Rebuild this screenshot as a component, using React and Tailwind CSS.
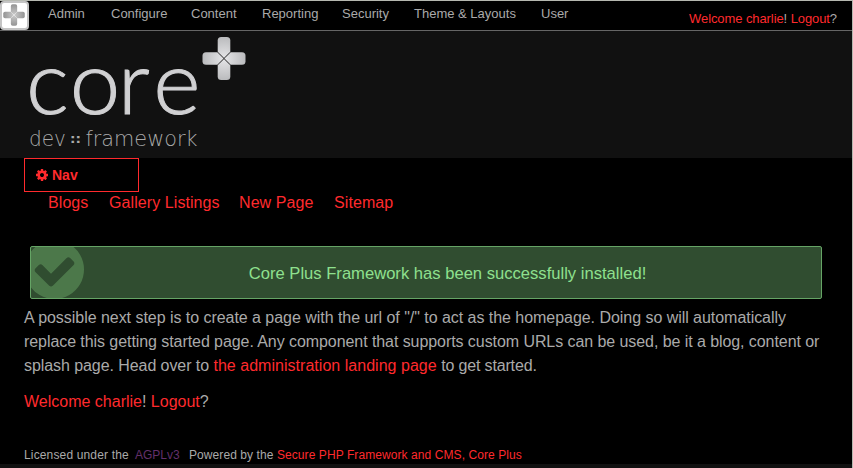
const adminMenu = [
  ["Admin", "w-[63px]"],
  ["Configure", "w-[80px]"],
  ["Content", "w-[71px]"],
  ["Reporting", "w-[80px]"],
  ["Security", "w-[72px]"],
  ["Theme & Layouts", "w-[127px]"],
  ["User", "w-[40px]"],
];

const pages = [
  ["Blogs", "w-[61px]"],
  ["Gallery Listings", "w-[130px]"],
  ["New Page", "w-[95px]"],
  ["Sitemap", "w-[70px]"],
];

function Link({ children }) {
  return <a className="text-[#ff2a2d]">{children}</a>;
}

function CogIcon({ className }) {
  return (
    <svg viewBox="0 0 1536 1536" fill="currentColor" className={className}>
      <path d="M1024 768q0-106-75-181t-181-75-181 75-75 181 75 181 181 75 181-75 75-181zm512-109v222q0 12-8 23t-20 13l-185 28q-19 54-39 91 35 50 107 138 10 12 10 25t-9 23q-27 37-99 108t-94 71q-12 0-26-9l-138-108q-44 23-91 38-16 136-29 186-7 28-36 28h-222q-14 0-24.500-8.500t-11.500-21.500l-28-184q-49-16-90-37l-141 107q-10 9-25 9-14 0-25-11-126-114-165-168-7-10-7-23 0-12 8-23 15-21 51-66.500t54-70.500q-27-50-41-99l-183-27q-13-2-21-12.500t-8-23.500v-222q0-12 8-23t19-13l186-28q14-46 39-92-40-57-107-138-10-12-10-24 0-10 9-23 26-36 98.500-107.500t94.500-71.500q13 0 26 10l138 107q44-23 91-38 16-136 29-186 7-28 36-28h222q14 0 24.500 8.500t11.500 21.500l28 184q49 16 90 37l142-107q9-9 24-9 13 0 25 10 129 119 165 170 7 8 7 22 0 12-8 23-15 21-51 66.500t-54 70.500q26 50 41 98l183 28q13 2 21 12.500t8 23.500z" />
    </svg>
  );
}

function CheckCircleIcon({ className }) {
  return (
    <svg viewBox="0 0 1536 1536" fill="currentColor" className={className}>
      <path d="M1284 606q0-28-18-46l-91-90q-19-19-45-19t-45 19l-408 407-226-226q-19-19-45-19t-45 19l-91 90q-18 18-18 46 0 27 18 45l362 362q19 19 45 19 27 0 46-19l543-543q18-18 18-45zm252 162q0 209-103 385.500t-279.500 279.500-385.500 103-385.500-103-279.500-279.500-103-385.500 103-385.500 279.500-279.500 385.500-103 385.500 103 279.500 279.500 103 385.500z" />
    </svg>
  );
}

function PlusMark({ id, light, dark, className }) {
  return (
    <svg viewBox="0 0 44 44" className={className}>
      <defs>
        <radialGradient id={id} gradientUnits="userSpaceOnUse" cx="22" cy="22" r="22">
          <stop offset="0" stopColor={light} />
          <stop offset="1" stopColor={dark} />
        </radialGradient>
      </defs>
      <g fill={`url(#${id})`}>
        <path d="M22 21.6 15.700 15.300V4Q15.700 .5 19.200 .5H24.800Q28.300 .5 28.300 4V15.300Z" />
        <path d="M22 22.400 28.300 28.700V40Q28.300 43.500 24.800 43.500H19.200Q15.700 43.500 15.700 40V28.700Z" />
        <path d="M21.600 22 15.300 28.300H4Q.5 28.300 .5 24.800V19.200Q.5 15.700 4 15.700H15.300Z" />
        <path d="M22.400 22 28.700 15.700H40Q43.500 15.700 43.500 19.200V24.800Q43.500 28.300 40 28.300H28.700Z" />
      </g>
    </svg>
  );
}

export default function App() {
  return (
    <div className="flex h-[468px] w-[853px] flex-col overflow-hidden border-t border-r border-[#b5b8b0] bg-black font-['Liberation_Sans',Arial,sans-serif] text-[#aaa]">
      <div className="flex h-[30px] shrink-0 border-b border-[#666]">
        <div className="flex h-[29px] w-[29px] rounded-sm border-2 border-[#c4c4c4] bg-white pt-px pl-px">
          <PlusMark id="smallPlus" light="#cccccc" dark="#929292" className="h-[22px] w-[22px]" />
        </div>
        <nav className="flex pl-[19px] text-[13px] leading-[26px]">
          {adminMenu.map(([label, width]) => (
            <a key={label} className={`${width} whitespace-nowrap`}>{label}</a>
          ))}
        </nav>
        <div className="ml-auto pt-[6px] pr-[15px] text-[13px] leading-6 tracking-[-0.09px]">
          <Link>Welcome charlie</Link>! <Link>Logout</Link>?
        </div>
      </div>

      <header className="h-[127px] shrink-0 bg-[#111]">
        <div className="flex pl-[24px]">
          <svg className="h-[127px] w-[178px] overflow-visible" viewBox="24 31 178 127">
            <text x="25.300 67.700 114.300 148.900" y="113.700" transform="scale(1.03 1)" strokeWidth="1" className="fill-[#d0d0d2] stroke-[#d0d0d2] font-[Lato] text-[88px] font-light">core</text>
            <g className="fill-[#aaa] font-['DejaVu_Sans'] text-[22px] font-extralight">
              <text x="29" y="146" textLength="37" lengthAdjust="spacingAndGlyphs">dev</text>
              <text x="70" y="142.500" textLength="11" lengthAdjust="spacingAndGlyphs" className="fill-[#aaa] text-[13px] font-bold">::</text>
              <text x="85.500" y="146" textLength="112" lengthAdjust="spacingAndGlyphs">framework</text>
            </g>
          </svg>
          <PlusMark id="logoPlus" light="#e6e6e8" dark="#b9babc" className="mt-[5px] h-[45px] w-[44px]" />
        </div>
      </header>

      <main className="flex grow flex-col px-[24px]">
        <div className="flex h-[34px] w-[115px] shrink-0 items-center gap-[4px] border border-[#ff2a2d] pl-[11px] text-[14px] font-bold text-[#ff2a2d]">
          <CogIcon className="h-[12px] w-[12px]" />
          <span>Nav</span>
        </div>
        <nav className="flex h-[54px] shrink-0 pl-[24px] text-[16px] leading-[21px]">
          {pages.map(([label, width]) => (
            <span key={label} className={`${width} whitespace-nowrap tracking-[0.08px]`}><Link>{label}</Link></span>
          ))}
        </nav>
        <div className="ml-[6px] flex h-[53px] w-[792px] shrink-0 items-center overflow-hidden rounded-[2px] border border-[#65a465] bg-[#304d30]">
          <CheckCircleIcon className="-mt-[7px] -ml-[6px] h-[59px] w-[59px] shrink-0 text-[#4c784a]" />
          <p className="grow pt-[2px] pr-[10px] text-center text-[16.600px] leading-6 text-[#8ee08e]">Core Plus Framework has been successfully installed!</p>
        </div>
        <p className="mt-[7px] text-[16px] leading-6 tracking-[-0.07px] whitespace-nowrap">
          <span className="tracking-[-0.04px]">A possible next step is to create a page with the url of "/" to act as the homepage. Doing so will automatically</span><br />
          replace this getting started page. Any component that supports custom URLs can be used, be it a blog, content or<br />
          splash page. Head over to <span className="tracking-[0.03px]"><Link>the administration landing page</Link></span> <span className="tracking-[-0.15px]">to get started.</span>
        </p>
        <p className="mt-[12px] text-[16px] leading-6"><Link>Welcome charlie</Link>! <Link>Logout</Link>?</p>
        <footer className="mt-[32px] flex text-[12px] leading-[18px]">
          <span className="w-[111px] tracking-[0.15px]">Licensed under the</span>
          <a className="w-[54px] text-[#63306b]">AGPLv3</a>
          <span className="tracking-[0.08px]">Powered by the <Link>Secure PHP Framework and CMS, Core Plus</Link></span>
        </footer>
      </main>
      <div className="h-[4px] shrink-0 bg-[#111]" />
    </div>
  );
}
